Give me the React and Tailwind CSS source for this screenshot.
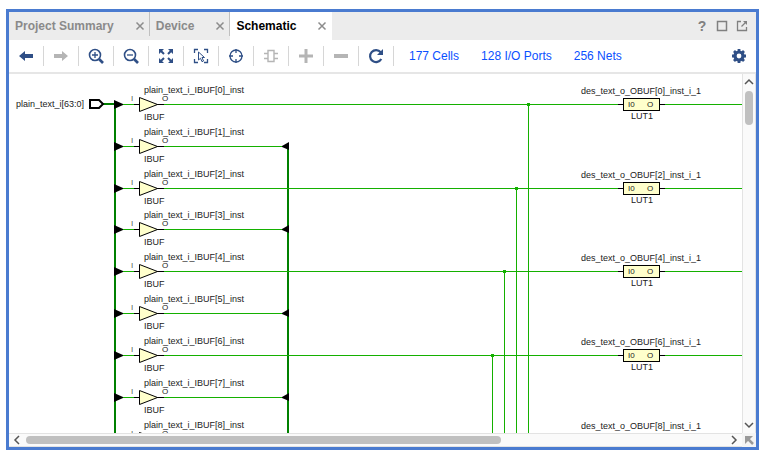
const FONT = "font-['Liberation_Sans',Arial,sans-serif]";
const NAVY = "#2f4f86";
const GREY = "#b5b5b5";

function Icon({ size = 16, children }) {
  return (
    <svg width={size} height={size} viewBox={`0 0 ${size} ${size}`} fill="none" aria-hidden="true" className="block shrink-0">
      {children}
    </svg>
  );
}

const ARROW_LEFT = "M1 8l6-5v3h8v4H7v3z";
const ARROW_RIGHT = "M15 8L9 3v3H1v4h8v3z";

const tools = [
  { label: "Previous", icon: <path d={ARROW_LEFT} fill={NAVY} /> },
  { label: "Next", disabled: true, icon: <path d={ARROW_RIGHT} fill={GREY} /> },
  {
    label: "Zoom In",
    icon: (
      <g stroke={NAVY}>
        <circle cx="7" cy="7" r="5.5" strokeWidth="1.6" />
        <path d="M11 11l4 4" strokeWidth="2.6" />
        <path d="M4 7h6M7 4v6" strokeWidth="1.3" />
      </g>
    ),
  },
  {
    label: "Zoom Out",
    icon: (
      <g stroke={NAVY}>
        <circle cx="7" cy="7" r="5.5" strokeWidth="1.6" />
        <path d="M11 11l4 4" strokeWidth="2.6" />
        <path d="M4 7h6" strokeWidth="1.3" />
      </g>
    ),
  },
  {
    label: "Zoom Fit",
    icon: (
      <g>
        <path d="M1 1h5L1 6zM15 1v5l-5-5zM1 15v-5l5 5zM15 15h-5l5-5z" fill={NAVY} />
        <path d="M3 3l3 3M13 3l-3 3M3 13l3-3M13 13l-3-3" stroke={NAVY} strokeWidth="2" />
      </g>
    ),
  },
  {
    label: "Select Area",
    icon: (
      <g stroke={NAVY}>
        <path d="M1.5 5V1.5H5M11 1.5h3.5V5M14.500 11v3.500H11M5 14.500H1.500V11" strokeWidth="1.3" />
        <path d="M5.500 4l6 5.500H9l1.500 3.500-1.500.7-1.500-3.400-2 1.700z" strokeWidth="1" />
      </g>
    ),
  },
  {
    label: "Autofit Selection",
    icon: (
      <g stroke={NAVY}>
        <circle cx="8" cy="8" r="6" strokeWidth="1.3" />
        <path d="M8 1v4M8 11v4M1 8h4M11 8h4" strokeWidth="1.3" />
      </g>
    ),
  },
  {
    label: "Expand Cell",
    disabled: true,
    icon: (
      <g stroke={GREY} strokeWidth="1.400">
        <path d="M5 2.500h6v11H5z" />
        <path d="M1 5.500h4M1 10.500h4M11 5.500h4M11 10.500h4" />
      </g>
    ),
  },
  { label: "Expand", disabled: true, icon: <path d="M1 8h14M8 1v14" stroke={GREY} strokeWidth="3" /> },
  { label: "Collapse", disabled: true, icon: <path d="M1 8h14" stroke={GREY} strokeWidth="4" /> },
  {
    label: "Reload",
    icon: (
      <g>
        <path d="M13.300 11a6 6 0 1 1-.6-6.800" stroke={NAVY} strokeWidth="2.200" />
        <path d="M15 1v6H9z" fill={NAVY} />
      </g>
    ),
  },
];

function Tab({ label, active }) {
  return (
    <div
      className={
        active
          ? "flex items-center gap-[21px] bg-white pr-[5px] pl-[6px] text-black"
          : "relative flex items-center gap-[21px] pr-[5px] pl-[6px] text-[#8a8a8a] after:absolute after:top-0 after:right-0 after:h-6 after:w-px after:bg-[#c0c0c0]"
      }
    >
      <button type="button" role="tab" aria-selected={!!active} className="text-xs font-bold whitespace-nowrap">
        {label}
      </button>
      <button type="button" aria-label={`Close ${label}`}>
        <Icon size={10}>
          <path d="M1.500 1.500l7 7M8.500 1.500l-7 7" stroke="#8c8c8c" strokeWidth="1.500" />
        </Icon>
      </button>
    </div>
  );
}

function TabBar() {
  return (
    <header className="flex h-7 shrink-0 justify-between bg-[#ececec]">
      <div role="tablist" className="flex">
        <Tab label="Project Summary" />
        <Tab label="Device" />
        <Tab label="Schematic" active />
      </div>
      <div className="flex items-center gap-2 pr-2 text-[#808080]">
        <button type="button" aria-label="Help" className="w-3 text-sm font-bold">?</button>
        <button type="button" aria-label="Maximize">
          <Icon size={12}>
            <path d="M1.500 1.500h9v9h-9z" stroke="#808080" strokeWidth="1.500" />
          </Icon>
        </button>
        <button type="button" aria-label="Float">
          <Icon size={12}>
            <path d="M5 1.500H1.500v9h9V7" stroke="#808080" strokeWidth="1.300" />
            <path d="M5.500 6.500L10 2" stroke="#808080" strokeWidth="1.300" />
            <path d="M7 1h4v4z" fill="#808080" />
          </Icon>
        </button>
      </div>
    </header>
  );
}

function Toolbar() {
  return (
    <div className="flex h-[34px] shrink-0 items-center border-b-2 border-[#e6e6e6] bg-white">
      {tools.map((tool) => (
        <button
          key={tool.label}
          type="button"
          aria-label={tool.label}
          disabled={tool.disabled}
          className="flex h-5 w-[35px] shrink-0 items-center justify-center border-r border-[#d6d6d6]"
        >
          <Icon>{tool.icon}</Icon>
        </button>
      ))}
      <nav className="flex gap-[22px] pl-[15px] text-xs whitespace-nowrap text-[#0a50ff]">
        <a href="#cells">177 Cells</a>
        <a href="#ports">128 I/O Ports</a>
        <a href="#nets">256 Nets</a>
      </nav>
      <button type="button" aria-label="Settings" className="mr-[9px] ml-auto">
        <Icon>
          <circle cx="8" cy="8" r="4" stroke={NAVY} strokeWidth="3.200" />
          <path d="M8 1v2.500M8 12.500V15M1 8h2.500M12.500 8H15M3 3l2 2M11 11l2 2M13 3l-2 2M5 11l-2 2" stroke={NAVY} strokeWidth="2.800" />
        </Icon>
      </button>
    </div>
  );
}

const rowY = [30, 72, 114, 155, 197, 239, 281, 323, 365];
const LAST_ROW = rowY.length - 1;
const tapX = { 0: 519, 2: 507, 4: 495, 6: 483 };
const WIRE = "#14b000";
const BUS = "#008000";
const FAR = 4000;

function InputBuffer({ index, y }) {
  const end = index % 2 ? 275 : FAR;
  return (
    <g transform={`translate(0 ${y})`}>
      <rect x="113" width={end - 113} height="1" fill={WIRE} />
      <rect x="125" width="30" height="1" fill="#000" />
      <path d="M105 -4v9l9 -4v-1z" fill="#000" />
      <path d="M130.500 -6.500v14l18 -7z" fill="#ffffcc" stroke="#000" />
      <text x="135" y="-11">{`plain_text_i_IBUF[${index}]_inst`}</text>
      <text x="122" y="-3" className="text-[8px]" fill="#555">I</text>
      <text x="153" y="-3" className="text-[8px]">O</text>
      {index < LAST_ROW && <text x="135" y="16">IBUF</text>}
      {index % 2 === 1 && <path d="M280 -4v8l-7 -3v-1z" fill="#000" />}
    </g>
  );
}

function Lut({ index, y }) {
  return (
    <g transform={`translate(0 ${y})`}>
      <rect x="609" width="47" height="1" fill="#000" />
      <rect x="614.500" y="-5.500" width="36" height="12" fill="#ffffcc" stroke="#000" />
      <text x="632" y="-10" textAnchor="middle">{`des_text_o_OBUF[${index}]_inst_i_1`}</text>
      <text x="619" y="3" className="text-[8px]">I0</text>
      <text x="638" y="3" className="text-[8px]">O</text>
      {index < LAST_ROW && <text x="633" y="15" textAnchor="middle">LUT1</text>}
    </g>
  );
}

function Schematic() {
  return (
    <div className="relative min-h-0 min-w-0 overflow-hidden bg-white">
      <svg width="100%" height="100%" className="absolute inset-0 text-[9px]" fill="#222">
        <rect x="94" y="29" width="12" height="2" fill={BUS} />
        <rect x="105" y="30" width="2" height={FAR} fill={BUS} />
        <rect x="278" y="72" width="2" height={FAR} fill={BUS} />
        {rowY.map((y, i) => (
          <InputBuffer key={y} index={i} y={y} />
        ))}
        {rowY.map((y, i) =>
          i % 2 === 0 ? (
            <g key={y}>
              {i in tapX && <rect x={tapX[i]} y={y} width="1" height={FAR} fill={WIRE} />}
              {i in tapX && <rect x={tapX[i] - 1} y={y - 1} width="3" height="3" fill={WIRE} />}
              <Lut index={i} y={y} />
            </g>
          ) : null
        )}
        <text x="75" y="33" textAnchor="end">plain_text_i[63:0]</text>
        <path d="M81 26h9l4 4-4 4h-9z" fill="#fff" stroke="#000" strokeWidth="2" />
      </svg>
    </div>
  );
}

function Chevron({ d }) {
  return (
    <Icon size={10}>
      <path d={d} stroke="#555" strokeWidth="1.500" />
    </Icon>
  );
}

function VerticalScrollbar() {
  return (
    <div className="flex w-[14px] flex-col items-center border-x border-[#e3e3e3] bg-[#fafafa] py-[3px]">
      <button type="button" aria-label="Scroll up"><Chevron d="M1 7l4-4 4 4" /></button>
      <div className="flex w-2 flex-1 flex-col pt-1">
        <div className="h-[34px] rounded-full bg-[#c0c0c0]" />
      </div>
      <button type="button" aria-label="Scroll down"><Chevron d="M1 3l4 4 4-4" /></button>
    </div>
  );
}

function HorizontalScrollbar() {
  return (
    <div className="flex h-[14px] items-center border-y border-[#e3e3e3] bg-[#fafafa] px-[3px]">
      <button type="button" aria-label="Scroll left"><Chevron d="M7 1L3 5l4 4" /></button>
      <div className="h-2 flex-1 px-1">
        <div className="h-2 w-[68%] rounded-full bg-[#c0c0c0]" />
      </div>
      <button type="button" aria-label="Scroll right"><Chevron d="M3 1l4 4-4 4" /></button>
    </div>
  );
}

export default function App() {
  return (
    <div className={`h-screen bg-white px-[6px] pt-[9px] pb-[5px] ${FONT}`}>
      <main className="flex h-full flex-col border-3 border-[#4a7bd0]">
        <TabBar />
        <Toolbar />
        <div className="grid min-h-0 flex-1 grid-cols-[1fr_auto] grid-rows-[1fr_auto]">
          <Schematic />
          <VerticalScrollbar />
          <HorizontalScrollbar />
          <button type="button" aria-label="Go to corner" className="flex items-center justify-center bg-[#f4f4f4]">
            <Icon size={10}>
              <path d="M1 1h8L1 9z" fill="#999" />
              <path d="M3 3l6 6" stroke="#999" strokeWidth="2.500" />
            </Icon>
          </button>
        </div>
      </main>
    </div>
  );
}
